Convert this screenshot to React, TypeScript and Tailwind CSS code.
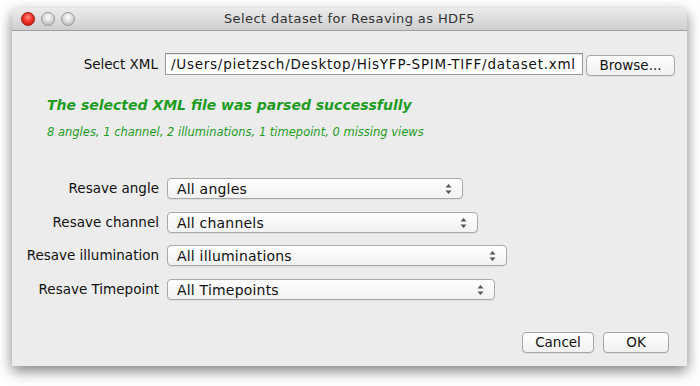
import React from "react";

const font = { fontFamily: '"DejaVu Sans", "Lucida Grande", sans-serif' };

function Arrows() {
  return (
    <svg width="7" height="11" viewBox="0 0 7 11" className="absolute right-[10px] top-1/2 -translate-y-1/2">
      <path d="M3.5 0.5 L6.5 4 L0.5 4 Z" fill="#555" />
      <path d="M3.5 10.5 L6.5 7 L0.5 7 Z" fill="#555" />
    </svg>
  );
}

function Select({ value, width }: { value: string; width: string }) {
  return (
    <div
      className={`relative h-[21px] ${width} rounded-[4px] border border-[#a9a9a9] bg-gradient-to-b from-[#ffffff] to-[#f1f1f1] shadow-[0_1px_0_rgba(0,0,0,0.06)] flex items-center pl-[9px] text-[14px] tracking-[0.2px] text-[#111]`}
    >
      <span className="leading-none">{value}</span>
      <Arrows />
    </div>
  );
}

function Button({ label, width }: { label: string; width: string }) {
  return (
    <div
      className={`h-[21px] ${width} rounded-[4px] border border-[#a6a6a6] bg-gradient-to-b from-[#ffffff] to-[#f0f0f0] shadow-[0_1px_0_rgba(0,0,0,0.06)] flex items-center justify-center text-[13.5px] text-[#111]`}
    >
      {label}
    </div>
  );
}

function Light({ color }: { color: "red" | "gray" }) {
  const cls =
    color === "red"
      ? "bg-[radial-gradient(circle_at_50%_35%,#ff8a80_0%,#f2332a_45%,#b3110c_100%)] border-[#9c1a14]"
      : "bg-[radial-gradient(circle_at_50%_35%,#ffffff_0%,#d8d8d8_50%,#a8a8a8_100%)] border-[#9a9a9a]";
  return <div className={`w-[14px] h-[14px] rounded-full border ${cls}`} />;
}

export default function App() {
  const rows = [
    { label: "Resave angle", value: "All angles", w: "w-[296px]" },
    { label: "Resave channel", value: "All channels", w: "w-[311px]" },
    { label: "Resave illumination", value: "All illuminations", w: "w-[340px]" },
    { label: "Resave Timepoint", value: "All Timepoints", w: "w-[328px]" },
  ];
  const mts = ["mt-[38px]", "mt-[13px]", "mt-[12px]", "mt-[13px]"];
  return (
    <div className="w-[700px] h-[386px] bg-white pl-[12px] pt-[8px] overflow-hidden" style={font}>
      <div className="w-[675px] h-[358px] bg-[#ececec] rounded-t-[5px] shadow-[0_5px_14px_rgba(0,0,0,0.5)] flex flex-col">
        {/* title bar */}
        <div className="relative h-[23px] rounded-t-[5px] bg-gradient-to-b from-[#ebebeb] to-[#cfcfcf] border-b border-[#9f9f9f] flex items-center">
          <div className="flex gap-[6px] pl-[9px]">
            <Light color="red" />
            <Light color="gray" />
            <Light color="gray" />
          </div>
          <div className="absolute inset-0 flex items-center justify-center text-[13px] tracking-[0.4px] text-[#333]">
            Select dataset for Resaving as HDF5
          </div>
        </div>

        {/* body */}
        <div className="flex flex-col pt-[22px]">
          <div className="flex items-center h-[22px]">
            <div className="w-[146px] text-right text-[13.5px] text-[#111]">Select XML</div>
            <div className="ml-[7px] w-[418px] h-[22px] bg-white border border-[#9b9b9b] border-t-[#8a8a8a] shadow-[inset_0_1px_1px_rgba(0,0,0,0.12)] flex items-center pl-[5px] text-[13.5px] tracking-[0.75px] text-[#111] whitespace-nowrap overflow-hidden">
              /Users/pietzsch/Desktop/HisYFP-SPIM-TIFF/dataset.xml
            </div>
            <div className="ml-[3px] mt-[2px]">
              <Button label="Browse..." width="w-[89px]" />
            </div>
          </div>

          <div className="mt-[20px] pl-[35px] h-[20px] leading-[20px] text-[14px] font-bold italic text-[#1f9c1f] whitespace-nowrap">
            The selected XML file was parsed successfully
          </div>
          <div className="mt-[9px] pl-[35px] h-[16px] leading-[16px] text-[11.5px] italic text-[#1f9c1f] whitespace-nowrap">
            8 angles, 1 channel, 2 illuminations, 1 timepoint, 0 missing views
          </div>

          {rows.map((r, i) => (
            <div key={r.label} className={`flex items-center h-[21px] ${mts[i]}`}>
              <div className="w-[147px] text-right text-[13.5px] text-[#111] whitespace-nowrap">{r.label}</div>
              <div className="ml-[8px]">
                <Select value={r.value} width={r.w} />
              </div>
            </div>
          ))}

          <div className="mt-[32px] flex justify-end gap-[9px] pr-[18px]">
            <Button label="Cancel" width="w-[72px]" />
            <Button label="OK" width="w-[66px]" />
          </div>
        </div>
      </div>
    </div>
  );
}
